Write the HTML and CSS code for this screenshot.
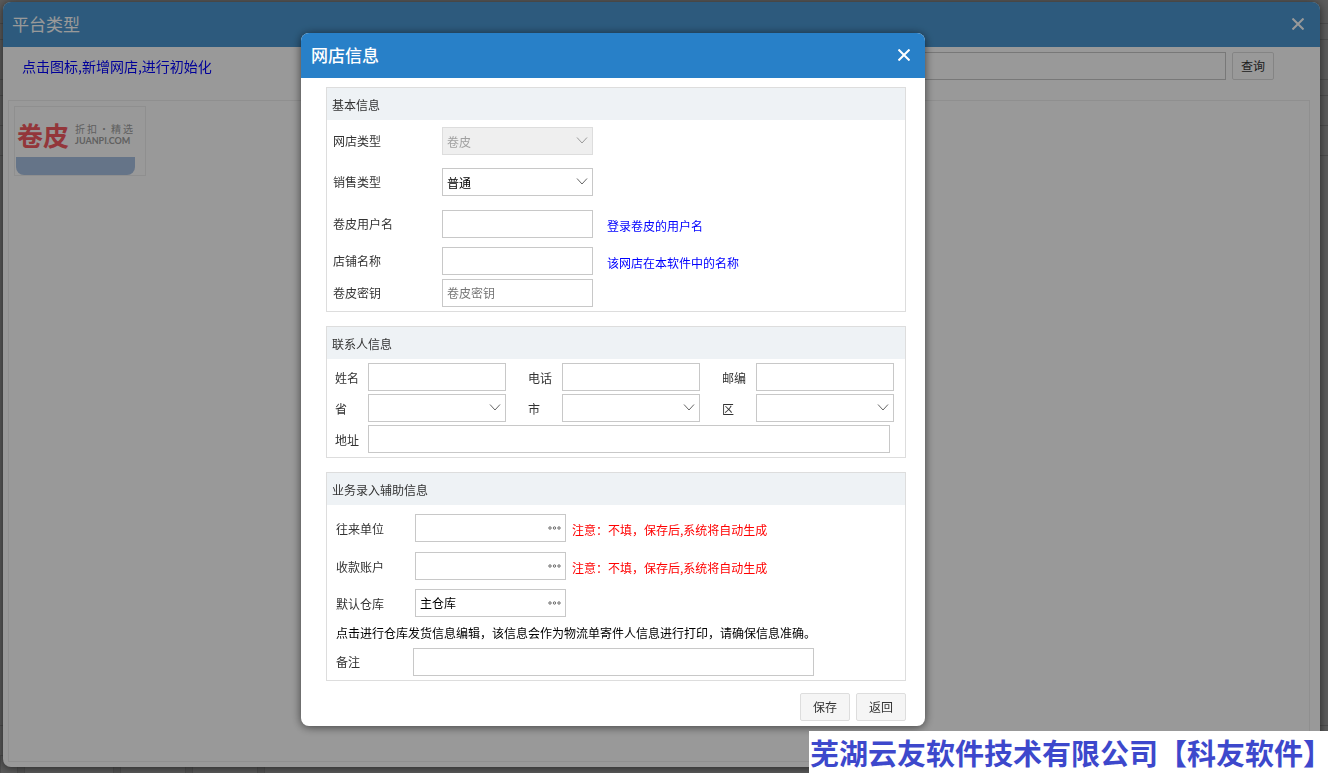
FILE: index.html
```html
<!DOCTYPE html>
<html lang="zh-CN">
<head>
<meta charset="utf-8">
<title>网店信息</title>
<link rel="stylesheet" href="styles.css">
</head>
<body>
<div class="page" aria-hidden="true">
  <div class="strip strip-m"></div>
  <div class="strip strip-s"></div>
  <div class="strip strip-l"></div>
  <div class="strip strip-s"></div>
  <div class="strip strip-r"></div>
  <div class="strip strip-r"></div>
  <div class="strip strip-fill"></div>
  <div class="strip strip-r"></div>
  <div class="tabs"><i class="tab-s"></i><i class="tab-l"></i><i class="tab-m"></i><i class="tab-m"></i><i class="tab-fill"></i></div>
</div>
<div class="shade"></div>

<section class="window platform">
  <header class="bar bar-platform">
    <h1 class="title">平台类型</h1>
    <button class="close" type="button" aria-label="关闭"><svg width="12" height="12" viewBox="0 0 12 12"><path d="M0.5 0.5L11.5 11.5M11.5 0.5L0.5 11.5"/></svg></button>
  </header>
  <div class="search">
    <p class="tip">点击图标,新增网店,进行初始化</p>
    <input class="field search-box" type="text" aria-label="平台查询">
    <button class="btn btn-query" type="button">查询</button>
  </div>
  <div class="panel">
    <button class="shop" type="button">
      <span class="logo">
        <span class="logo-name">卷皮</span>
        <span class="logo-side">
          <span class="logo-slogan"><span>折</span><span>扣</span><span>·</span><span>精</span><span>选</span></span>
          <span class="logo-site">JUANPI.COM</span>
        </span>
      </span>
      <span class="shop-foot"></span>
    </button>
  </div>
</section>
<div class="shade"></div>

<section class="window dialog" role="dialog" aria-labelledby="dialog-title">
  <header class="bar">
    <h2 class="title title-strong" id="dialog-title">网店信息</h2>
    <button class="close" type="button" aria-label="关闭"><svg width="12" height="12" viewBox="0 0 12 12"><path d="M0.5 0.5L11.5 11.5M11.5 0.5L0.5 11.5"/></svg></button>
  </header>
  <form class="form">
    <section class="group">
      <h3 class="group-title">基本信息</h3>
      <div class="rows basic">
        <label for="shop-type">网店类型</label>
        <span class="combo combo-off"><select class="field" id="shop-type" disabled><option>卷皮</option></select><svg width="12" height="7" viewBox="0 0 12 7"><path d="M1 0.5L6 6L11 0.5"/></svg></span>
        <span></span>
        <label for="sale-type">销售类型</label>
        <span class="combo"><select class="field" id="sale-type"><option>普通</option></select><svg width="12" height="7" viewBox="0 0 12 7"><path d="M1 0.5L6 6L11 0.5"/></svg></span>
        <span></span>
        <label for="user">卷皮用户名</label>
        <input class="field" id="user" type="text">
        <span class="hint">登录卷皮的用户名</span>
        <label for="shop">店铺名称</label>
        <input class="field" id="shop" type="text">
        <span class="hint">该网店在本软件中的名称</span>
        <label for="key">卷皮密钥</label>
        <input class="field" id="key" type="text" placeholder="卷皮密钥">
        <span></span>
      </div>
    </section>

    <section class="group">
      <h3 class="group-title">联系人信息</h3>
      <div class="rows contact">
        <label for="name">姓名</label><input class="field" id="name" type="text">
        <label class="next" for="tel">电话</label><input class="field" id="tel" type="text">
        <label class="next" for="zip">邮编</label><input class="field" id="zip" type="text">
        <label for="prov">省</label>
        <span class="combo"><select class="field" id="prov"><option></option></select><svg width="12" height="7" viewBox="0 0 12 7"><path d="M1 0.5L6 6L11 0.5"/></svg></span>
        <label class="next" for="city">市</label>
        <span class="combo"><select class="field" id="city"><option></option></select><svg width="12" height="7" viewBox="0 0 12 7"><path d="M1 0.5L6 6L11 0.5"/></svg></span>
        <label class="next" for="area">区</label>
        <span class="combo"><select class="field" id="area"><option></option></select><svg width="12" height="7" viewBox="0 0 12 7"><path d="M1 0.5L6 6L11 0.5"/></svg></span>
        <label for="addr">地址</label><input class="field addr" id="addr" type="text">
      </div>
    </section>

    <section class="group">
      <h3 class="group-title">业务录入辅助信息</h3>
      <div class="rows business">
        <label for="unit">往来单位</label>
        <span class="combo"><input class="field" id="unit" type="text"><svg width="13" height="4" viewBox="0 0 13 4"><circle cx="2" cy="2" r="1.2"/><circle cx="6.5" cy="2" r="1.2"/><circle cx="11" cy="2" r="1.2"/></svg></span>
        <span class="warn">注意：不填，保存后,系统将自动生成</span>
        <label for="account">收款账户</label>
        <span class="combo"><input class="field" id="account" type="text"><svg width="13" height="4" viewBox="0 0 13 4"><circle cx="2" cy="2" r="1.2"/><circle cx="6.5" cy="2" r="1.2"/><circle cx="11" cy="2" r="1.2"/></svg></span>
        <span class="warn">注意：不填，保存后,系统将自动生成</span>
        <label for="store">默认仓库</label>
        <span class="combo"><input class="field" id="store" type="text" value="主仓库"><svg width="13" height="4" viewBox="0 0 13 4"><circle cx="2" cy="2" r="1.2"/><circle cx="6.5" cy="2" r="1.2"/><circle cx="11" cy="2" r="1.2"/></svg></span>
        <span></span>
      </div>
      <p class="note">点击进行仓库发货信息编辑，该信息会作为物流单寄件人信息进行打印，请确保信息准确。</p>
      <div class="remark">
        <label for="remark">备注</label><input class="field" id="remark" type="text">
      </div>
    </section>
    <div class="actions">
      <button class="btn" type="button">保存</button>
      <button class="btn" type="button">返回</button>
    </div>
  </form>
</section>

<div class="mark">芜湖云友软件技术有限公司【科友软件<span class="mark-end">】</span></div>
</body>
</html>
```

FILE: styles.css
```css
* { box-sizing: border-box; }
html, body { height: 100%; }
body {
  margin: 0;
  overflow: hidden;
  background: #fff;
  color: #333;
  font: 12px/18px "Noto Sans CJK SC", sans-serif;
}
h1, h2, h3, p { margin: 0; font-weight: 400; }
button, input, select { font: inherit; color: inherit; }

.page { height: 100%; display: flex; flex-direction: column; }
.strip { flex: none; border-bottom: 1px solid #d8d8d8; }
.strip-s { height: 16px; }
.strip-m { height: 24px; }
.strip-l { height: 40px; }
.strip-r { height: 30px; }
.strip-fill { flex: 1; }
.tabs { height: 17px; display: flex; gap: 6px; background: #eee; }
.tabs i { border: 1px solid #ddd; border-width: 0 1px; background: #fff; }
.tab-s { width: 18px; }
.tab-l { width: 90px; }
.tab-m { width: 66px; }
.tab-fill { flex: 1; }

.shade { position: fixed; inset: 0; background: rgba(0, 0, 0, .4); }

.window {
  background: #fff;
  border-radius: 8px;
  overflow: hidden;
  box-shadow: 0 1px 10px rgba(0, 0, 0, .6);
}
.platform {
  position: fixed;
  inset: 2px 8px 6px 3px;
  display: flex;
  flex-direction: column;
}
.dialog {
  position: fixed;
  top: 33px;
  left: 301px;
  width: 624px;
  max-width: calc(100% - 301px);
}

.bar {
  height: 45px;
  padding: 0 15px 2px 10px;
  display: flex;
  align-items: center;
  justify-content: space-between;
  background: #2880c8;
  color: #fff;
}
.bar-platform { padding-left: 9px; padding-right: 16px; background: #4b97d1; }
.title { font-size: 17px; line-height: 24px; }
.title-strong { font-weight: 500; }
.close { padding: 0; border: 0; background: none; display: flex; }
.close svg { fill: none; stroke: #fff; stroke-width: 2; }

.search { display: flex; gap: 6px; padding: 5px 46px 0 19px; }
.tip { flex: 0 0 400px; font-size: 14px; line-height: 28px; color: #00f; }
.search-box { flex: 1; }
.btn {
  width: 50px;
  height: 28px;
  padding: 0 0 1px;
  border: 1px solid #ddd;
  border-radius: 2px;
  background: #f5f5f5;
}
.btn-query { width: 42px; background: #fff; }
.panel {
  flex: 1;
  margin: 20px 10px 5px 5px;
  padding: 5px;
  border: 1px solid #eee;
}
.shop {
  width: 132px;
  height: 70px;
  padding: 0 0 0 1px;
  border: 1px solid #eee;
  background: #fff;
  display: flex;
  flex-direction: column;
}
.logo { height: 50px; width: 119px; padding: 6px 2px 0 1px; display: flex; gap: 6px; align-items: center; }
.logo-name { flex: none; font-size: 26px; line-height: 30px; font-weight: 700; color: #f65a62; white-space: nowrap; }
.logo-side { flex: 1; color: #a0a0a0; display: flex; flex-direction: column; }
.logo-slogan { font-size: 10px; line-height: 12px; display: flex; justify-content: space-between; }
.logo-site { font: 700 9px/12px Lato, sans-serif; text-align: left; }
.shop-foot { height: 18px; width: 119px; border-radius: 0 0 8px 8px; background: #a9c2e3; }

.form { padding: 9px 19px 5px 25px; }
.group { border: 1px solid #ddd; margin-bottom: 14px; }
.group-title { height: 32px; padding: 8px 5px 0; font-size: 12px; line-height: 18px; background: #eef2f5; }
.field {
  width: 100%;
  height: 28px;
  min-width: 0;
  padding: 0 4px;
  border: 1px solid #c8c8c8;
  border-radius: 0;
  background: #fff;
  color: #000;
  appearance: none;
}
.field::placeholder { color: #757575; }
.combo { display: grid; }
.combo > * { grid-area: 1 / 1; }
.combo svg { justify-self: end; align-self: center; margin-right: 5px; margin-bottom: 1px; fill: none; stroke: #666; pointer-events: none; }
.combo-off .field { background: #efefef; border-color: #ddd; color: #a0a0a0; opacity: 1; }
.combo-off svg { stroke: #999; }
.rows { display: grid; align-items: start; line-height: 28px; }
.basic {
  grid-template-columns: 109px 151px 1fr;
  grid-template-rows: 41px 42px 37px 32px 28px;
  padding: 7px 6px 4px;
}
.hint { padding: 2px 0 0 14px; color: #00f; }
.warn { padding: 2px 0 0 6px; color: #f00; }
.contact {
  grid-template-columns: 33px 1fr 56px 1fr 56px 1fr;
  grid-auto-rows: 28px;
  row-gap: 3px;
  padding: 4px 11px 4px 8px;
}
.contact label { padding-top: 1px; }
.contact .next { padding-left: 22px; }
.addr { grid-column: 2 / -1; width: calc(100% - 4px); }
.business {
  grid-template-columns: 79px 151px 1fr;
  grid-template-rows: 38px 37px 28px;
  padding: 9px 9px 0;
}
.business label { padding-top: 1px; }
.note { padding: 7px 9px 6px; color: #000; }
.remark { display: grid; grid-template-columns: 77px 401px; align-items: center; padding: 0 9px 4px; }
.actions { display: flex; justify-content: flex-end; gap: 6px; margin-top: -2px; }

.mark {
  position: fixed;
  right: 0;
  bottom: 0;
  height: 42px;
  width: 519px;
  padding-left: 1px;
  background: #fff;
  color: #3d48cc;
  font-size: 29px;
  line-height: 42px;
  font-weight: 700;
  white-space: nowrap;
}
.mark-end { font-feature-settings: "halt"; }
```
